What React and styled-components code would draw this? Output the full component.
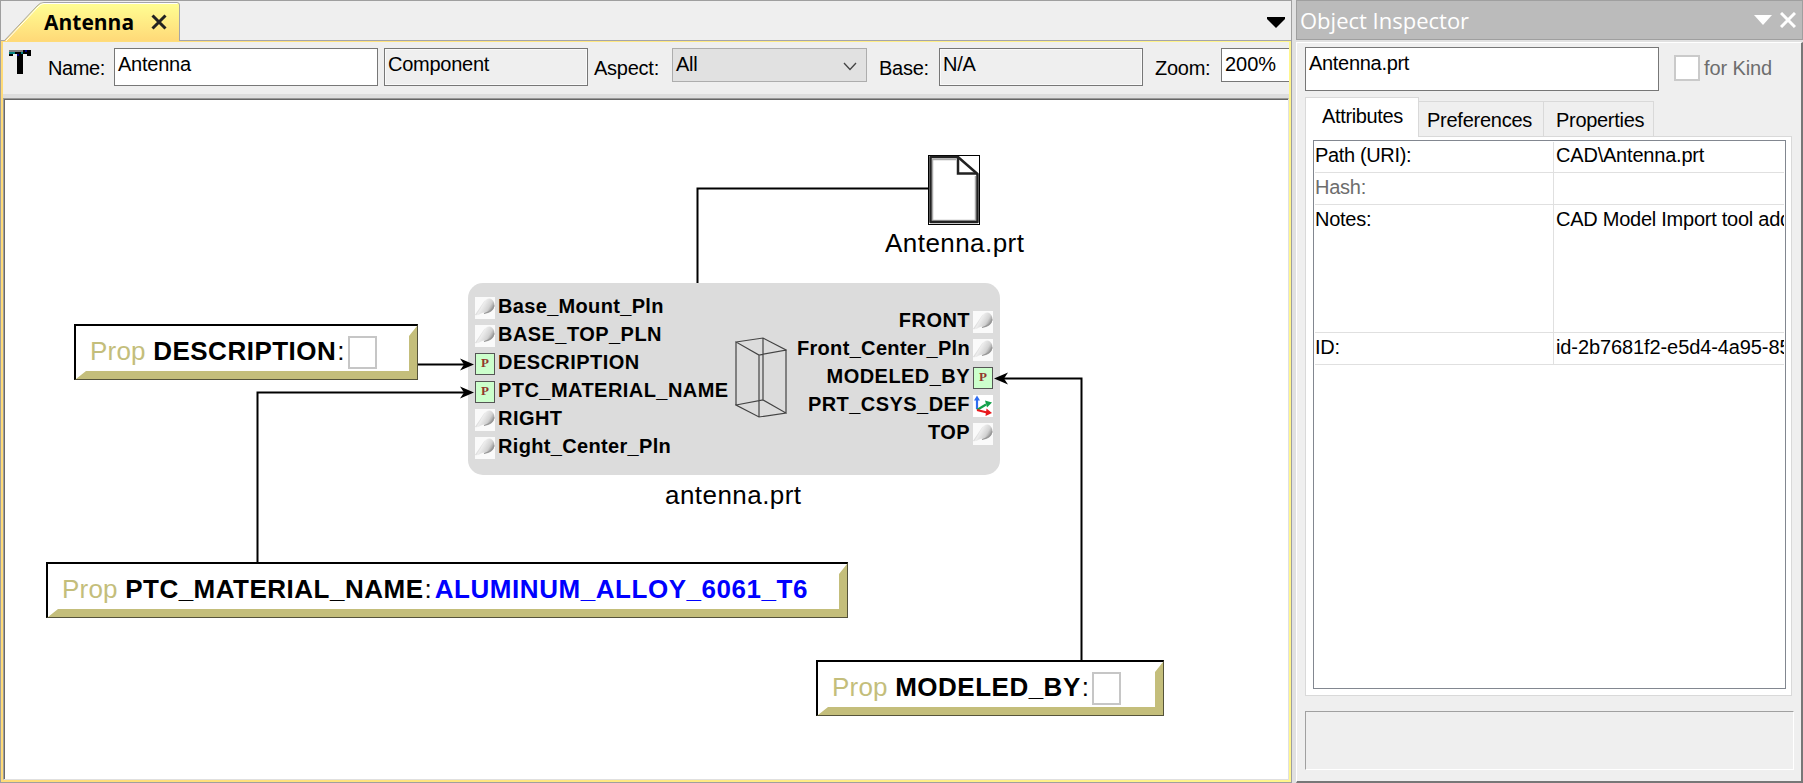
import React from "react";
import styled, { createGlobalStyle } from "styled-components";

const Global = createGlobalStyle`
  *{box-sizing:border-box}
  body{margin:0;background:#e1e1e1;overflow:hidden;font-family:"Liberation Sans",Arial,sans-serif;color:#000}
`;
const Workspace = styled.main`display:grid;grid-template-columns:1292px 507px;column-gap:4px;width:1803px;height:783px;background:#e1e1e1;`;
const T = styled.span`
  display:inline-block;white-space:pre;line-height:24px;
  font-size:${p => p.$s || 20}px;font-weight:${p => (p.$b ? 700 : 400)};
  letter-spacing:${p => p.$ls ?? -0.25}px;color:${p => p.$c || "#000"};
`;
const Editor = styled.section`display:flex;flex-direction:column;height:783px;background:#efefef;border:1px solid #9f9f9f;`;
const TabStrip = styled.header`height:40px;border-bottom:1px solid #a5a5a9;display:flex;justify-content:space-between;`;
const Tab = styled.div`position:relative;width:180px;height:40px;display:flex;align-items:center;padding:1px 0 0 43px;gap:17px;`;
const TabShape = styled.svg`position:absolute;left:0;top:0;`;
const TabTitle = styled.b`position:relative;font:700 21px/28px "Open Sans",sans-serif;`;
const Cross = styled.svg`position:relative;`;
const StripMenu = styled.svg`margin:16px 6px 0 0;`;
const Frame = styled.div`
  flex:1;display:flex;flex-direction:column;padding:1px 2px 2px 2px;
  background:linear-gradient(90deg,#ffdb78,#fff68c);
`;
const Toolbar = styled.div`height:56px;background:#efefef;border-bottom:4px solid #dedede;display:flex;align-items:flex-start;padding:6px 0 0 6px;overflow:hidden;`;
const Glyph = styled.svg`margin:2px 17px 0 0;flex:none;`;
const Label = styled.label`flex:none;width:${p => p.$w}px;height:38px;padding-top:8px;`;
const Field = styled.div`
  flex:none;width:${p => p.$w}px;height:${p => p.$h || 38}px;margin-right:${p => p.$mr || 0}px;
  border:1px solid ${p => p.$line || "#777"};background:${p => p.$bg || "#fff"};
  box-shadow:${p => (p.$inset ? "inset 0 0 0 1px #fafafa" : "none")};
  padding:3px 9px 0 3px;display:flex;justify-content:space-between;
`;
const Chevron = styled.svg`margin-top:10px;`;
const Canvas = styled.div`
  position:relative;flex:1;background:#fff;border:1px solid #a0a0a0;border-top-color:#999;border-right-color:#e0e0e0;border-bottom-color:#e0e0e0;
  box-shadow:inset 0 1px 0 #666,inset 1px 0 0 #696969;overflow:hidden;
`;
const Wires = styled.svg`position:absolute;left:-4px;top:-99px;pointer-events:none;`;
const Placed = styled.div`position:absolute;left:${p => p.$x - 4}px;top:${p => p.$y - 99}px;`;
const PropBox = styled(Placed)`
  width:${p => p.$w}px;height:56px;background:#fff;border:2px solid #000;border-right:1px solid #55533a;border-bottom:1px solid #55533a;
  display:flex;align-items:center;padding:0 0 4px 14px;
`;
const Bevel = styled.i`
  position:absolute;inset:0;background:#c4be7b;
  clip-path:polygon(100% 0,100% 100%,0 100%,10px calc(100% - 8px),calc(100% - 8px) calc(100% - 8px),calc(100% - 8px) 10px);
`;
const Colon = styled(T)`margin:0 3px 0 1px;`;
const Empty = styled.i`width:29px;height:33px;border:2px solid #c6c6c6;margin:3px 0 0 0;`;
const Block = styled(Placed)`width:532px;height:192px;border-radius:15px;background:#dcdcdc;display:grid;grid-template-columns:260px 52px 1fr;padding:0 7px 0 7px;`;
const Ports = styled.div`display:flex;flex-direction:column;padding-top:${p => p.$t}px;`;
const Port = styled.div`height:28px;display:flex;align-items:center;gap:3px;justify-content:${p => (p.$right ? "flex-end" : "flex-start")};`;
const Icon = styled.svg`flex:none;margin-top:4px;`;
const PortP = styled.i`flex:none;width:20px;height:22px;margin-top:4px;border:1.5px solid #555;background:#ccffcc;font:700 13px/18px "Liberation Serif",serif;color:#93382e;text-align:center;`;
const Cube = styled.svg`margin:54px 0 0 0;`;

const Inspector = styled.aside`display:flex;flex-direction:column;height:783px;`;
const InspHead = styled.header`
  height:40px;background:#bbb;border:1px solid #9f9f9f;display:flex;align-items:center;padding:0 6px 0 3px;color:#fff;gap:8px;
  font:400 22px/30px "Open Sans",sans-serif;
`;
const HeadTitle = styled.span`flex:1;`;
const InspBody = styled.div`
  flex:1;margin-top:2px;background:#efefef;border:solid;border-width:1px 2px 2px 1px;border-color:#fff #777 #777 #fff;
  padding:4px 0 0 8px;display:flex;flex-direction:column;
`;
const NameRow = styled.div`display:flex;height:50px;`;
const NameField = styled(Field)`height:44px;`;
const Check = styled.i`width:26px;height:26px;border:2px solid #cacaca;background:#fff;margin:8px 4px 0 0;`;
const KindLabel = styled.label`padding-top:9px;`;
const Tabs = styled.div`display:flex;align-items:flex-end;height:39px;`;
const InspTab = styled.div`
  width:${p => p.$w}px;height:${p => (p.$on ? 40 : 35)}px;background:${p => (p.$on ? "#fff" : "#efefef")};
  border:1px solid #d9d9d9;border-bottom:0;border-left-width:${p => (p.$on ? 1 : 0)}px;
  position:relative;z-index:1;margin-bottom:${p => (p.$on ? -1 : 0)}px;padding:${p => (p.$on ? "6px 0 0 16px" : "6px 0 0 " + p.$l + "px")};
`;
const Panel = styled.div`width:487px;height:560px;background:#fff;border:1px solid #d9d9d9;padding:3px 0 0 7px;`;
const Table = styled.div`width:473px;height:549px;border:1px solid #828790;padding:1px;`;
const Row = styled.div`display:grid;grid-template-columns:239px 1fr;height:${p => p.$h}px;border-bottom:1px solid #e0e0e0;`;
const Cell = styled.div`overflow:hidden;padding:${p => p.$t || 1}px 0 0 ${p => (p.$first ? 0 : 2)}px;border-right:${p => (p.$first ? "1px solid #e0e0e0" : "0")};`;
const Status = styled.div`width:489px;height:59px;margin-top:15px;border:1px solid #a0a0a0;border-right-color:#fff;border-bottom-color:#fff;`;

const PlaneIcon = () => (
  <Icon width="20" height="22" viewBox="0 0 20 22">
    <defs><linearGradient id="pl" x1="0" y1=".2" x2="1" y2=".7"><stop offset=".2" stopColor="#b8b8b8" /><stop offset=".4" stopColor="#ededed" /><stop offset=".7" stopColor="#d2d2d2" /><stop offset="1" stopColor="#777" /></linearGradient></defs>
    <rect width="20" height="22" fill="#fafafa" />
    <path d="M0 18L8 6Q11 1 15 1.500Q19.500 3 19.500 9Q18 15 12 16Q9 15 6 16.500Q3 19 0 18Z" fill="url(#pl)" />
    <path d="M9 16.500Q17 15 19 8.500" fill="none" stroke="#999" strokeWidth="1.200" />
  </Icon>
);
const AxesIcon = () => (
  <Icon width="20" height="22" viewBox="0 0 20 22">
    <rect width="20" height="22" fill="#fff" />
    <path d="M4 14V3" stroke="#2f6df0" strokeWidth="2.200" />
    <path d="M1 5.500L4 0.500L7 5.500Z" fill="#2f6df0" />
    <path d="M4 15L13 9.500" stroke="#14a04a" strokeWidth="2.200" />
    <path d="M12 5.500L19 7.500L14 12.500Z" fill="#14a04a" />
    <path d="M4 15L14 17.500" stroke="#e8191c" strokeWidth="2.200" />
    <path d="M13.500 13.500L19 18L12.500 21Z" fill="#e8191c" />
  </Icon>
);
const left = [["Base_Mount_Pln"], ["BASE_TOP_PLN"], ["DESCRIPTION", "p"], ["PTC_MATERIAL_NAME", "p"], ["RIGHT"], ["Right_Center_Pln"]];
const right = [["FRONT"], ["Front_Center_Pln"], ["MODELED_BY", "p"], ["PRT_CSYS_DEF", "a"], ["TOP"]];
const PortIcon = ({ kind }) => (kind === "p" ? <PortP>P</PortP> : kind === "a" ? <AxesIcon /> : <PlaneIcon />);
const PortName = ({ name }) => <T $s={20} $b $ls={/[a-z]/.test(name) ? 0.33 : 0.45}>{name}</T>;

const Prop = ({ x, y, w, name, value }) => (
  <PropBox $x={x} $y={y} $w={w}>
    <Bevel />
    <T $s={26} $c="#c4be7b" $ls={0.2}>Prop </T>
    <T $s={26} $b $ls={0.5}>{name}</T>
    <Colon $s={26} $ls={0}>:</Colon>
    {value ? <T $s={26} $b $c="#0000ff" $ls={0.55}>{value}</T> : <Empty />}
  </PropBox>
);

export default function App() {
  return (
    <Workspace>
      <Global />
      <Editor>
        <TabStrip>
          <Tab>
            <TabShape width="180" height="41">
              <defs><linearGradient id="tg" x1="0" y1="0" x2="0" y2="1"><stop offset="0" stopColor="#ffff93" /><stop offset="1" stopColor="#ffd978" /></linearGradient></defs>
              <path d="M3 40L36 5Q39 1.500 43 1.500H176Q178.500 1.500 178.500 4V40" fill="url(#tg)" stroke="#a5a5a9" />
              <path d="M5 40L37 6Q40 2.500 43 2.500H176.500" fill="none" stroke="#fff" />
            </TabShape>
            <TabTitle>Antenna</TabTitle>
            <Cross width="16" height="16"><path d="M1.500 1.500L14.500 14.500M14.500 1.500L1.500 14.500" stroke="#222" strokeWidth="3" /></Cross>
          </Tab>
          <StripMenu width="18" height="12"><path d="M0 0H18V2L9 11L0 2Z" fill="#000" /></StripMenu>
        </TabStrip>
        <Frame>
          <Toolbar>
            <Glyph width="22" height="24" viewBox="0 0 22 24">
              <path d="M0 0H22V6H18V4H14V24H8V4H4V6H0Z" fill="#000" />
              <path d="M0 0H14V2H6V4H0Z" fill="#808080" /><path d="M0 2H6V4H0ZM12 2H16V0H18V2H14V4H12Z" fill="#008080" /><path d="M16 0H18V2H16ZM8 4H10V6H8Z" fill="#000080" />
            </Glyph>
            <Label $w={66}><T $ls={-0.4}>Name:</T></Label>
            <Field $w={264} $mr={6}><T>Antenna</T></Field>
            <Field $w={204} $mr={6} $bg="#efefef" $inset><T>Component</T></Field>
            <Label $w={78}><T>Aspect:</T></Label>
            <Field $w={195} $mr={12} $h={34} $bg="#e1e1e1" $line="#adadad">
              <T>All</T><Chevron width="14" height="9"><path d="M1 1L7 7.500L13 1" fill="none" stroke="#444" strokeWidth="1.300" /></Chevron>
            </Field>
            <Label $w={60}><T>Base:</T></Label>
            <Field $w={204} $mr={12} $bg="#efefef" $inset><T>N/A</T></Field>
            <Label $w={66}><T>Zoom:</T></Label>
            <Field $w={90} $h={34}><T $ls={0}>200%</T></Field>
          </Toolbar>
          <Canvas>
            <Placed $x={885} $y={231}><T $s={26} $ls={0.45}>Antenna.prt</T></Placed>
            <Placed $x={665} $y={483}><T $s={26} $ls={0.45}>antenna.prt</T></Placed>
            <Block $x={468} $y={283}>
              <Ports $t={9}>{left.map(([n, k]) => <Port key={n}><PortIcon kind={k} /><PortName name={n} /></Port>)}</Ports>
              <Cube width="52" height="82" fill="none" stroke="#444" strokeWidth="1.200">
                <path d="M1 5L28 1L51 13L24 18ZM1 68L28 63L51 76L24 80ZM1 5V68M28 1V63M51 13V76M24 18V80" />
              </Cube>
              <Ports $t={23}>{right.map(([n, k]) => <Port key={n} $right><PortName name={n} /><PortIcon kind={k} /></Port>)}</Ports>
            </Block>
            <Wires width="1290" height="783" fill="none" stroke="#000" strokeWidth="2">
              <path d="M697.500 283V188.500H929M418 364.500H466M257.500 562V392.500H466M1081.500 660V378.500H1002" />
              <path d="M474 364.500L460 358.500L464 364.500L460 370.500ZM474 392.500L460 386.500L464 392.500L460 398.500ZM994 378.500L1008 372.500L1004 378.500L1008 384.500Z" fill="#000" stroke="none" />
              <path d="M932.500 159.500H956M975.500 176V220.500H932.500V159" stroke="#aaa" strokeWidth="1.500" />
              <rect x="928.500" y="155.500" width="51" height="69" strokeWidth="1" />
              <path d="M930.500 157H958L977.500 174V222H930.500Z" strokeWidth="2.500" stroke="#222" strokeLinejoin="round" />
              <path d="M958 157V173.500H977" strokeWidth="2.500" stroke="#222" />
            </Wires>
            <Prop x={74} y={324} w={344} name="DESCRIPTION" />
            <Prop x={46} y={562} w={802} name="PTC_MATERIAL_NAME" value="ALUMINUM_ALLOY_6061_T6" />
            <Prop x={816} y={660} w={348} name="MODELED_BY" />
          </Canvas>
        </Frame>
      </Editor>
      <Inspector>
        <InspHead>
          <HeadTitle>Object Inspector</HeadTitle>
          <svg width="18" height="11"><path d="M0 0H18L9 10Z" fill="#fff" /></svg>
          <svg width="16" height="16"><path d="M1 1L15 15M15 1L1 15" stroke="#fff" strokeWidth="3" /></svg>
        </InspHead>
        <InspBody>
          <NameRow>
            <NameField $w={354} $mr={15}><T $ls={-0.3}>Antenna.prt</T></NameField>
            <Check /><KindLabel><T $c="#6d6d6d" $ls={-0.1}>for Kind</T></KindLabel>
          </NameRow>
          <Tabs>
            <InspTab $on $w={114}><T $ls={-0.35}>Attributes</T></InspTab>
            <InspTab $w={125} $l={8}><T>Preferences</T></InspTab>
            <InspTab $w={110} $l={12}><T $ls={-0.3}>Properties</T></InspTab>
          </Tabs>
          <Panel>
            <Table>
              <Row $h={31}><Cell $first><T $ls={-0.35}>Path (URI):</T></Cell><Cell><T $ls={-0.2}>CAD\Antenna.prt</T></Cell></Row>
              <Row $h={32}><Cell $first $t={2}><T $c="#6d6d6d">Hash:</T></Cell><Cell /></Row>
              <Row $h={128}><Cell $first $t={2}><T>Notes:</T></Cell><Cell $t={2}><T>CAD Model Import tool add</T></Cell></Row>
              <Row $h={32}><Cell $first $t={2}><T>ID:</T></Cell><Cell $t={2}><T $ls={-0.1}>id-2b7681f2-e5d4-4a95-85</T></Cell></Row>
            </Table>
          </Panel>
          <Status />
        </InspBody>
      </Inspector>
    </Workspace>
  );
}
